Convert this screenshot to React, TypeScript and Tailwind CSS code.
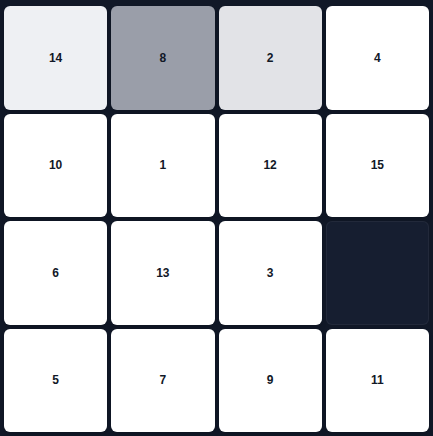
const TILES: (number | null)[] = [14, 8, 2, 4, 10, 1, 12, 15, 6, 13, 3, null, 5, 7, 9, 11];

const TINT: Record<number, string> = {
  14: "bg-[#eef0f3]",
  8: "bg-[#9a9ea9]",
  2: "bg-[#e2e3e7]",
};

export default function App() {
  return (
    <div className="h-[436px] w-[433px] bg-[#111827] px-1 pt-[6px] pb-1" style={{ fontFamily: '"Liberation Sans", Arial, sans-serif' }}>
      <div className="grid h-full grid-cols-4 grid-rows-4 gap-1">
        {TILES.map((n, i) =>
          n === null ? (
            <div key={i} className="rounded-md border border-white/5 bg-[#161e30]" />
          ) : (
            <div
              key={i}
              className={`flex items-center justify-center rounded-md text-xs font-bold text-[#111827] shadow-md ${TINT[n] ?? "bg-white"}`}
            >
              {n}
            </div>
          )
        )}
      </div>
    </div>
  );
}
